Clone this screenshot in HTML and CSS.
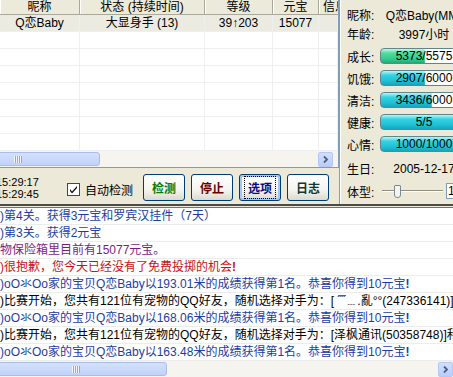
FILE: index.html
```html
<!DOCTYPE html>
<html lang="zh">
<head>
    <meta charset="UTF-8">
    <title>宠物助手</title>
    <link rel="stylesheet" href="styles.css">
</head>
<body>
    <div class="top">
        <div class="left">
            <div class="list">
                <div class="lv-head">
                    <span>昵称</span>
                    <span>状态 (持续时间)</span>
                    <span>等级</span>
                    <span>元宝</span>
                    <span class="cut">信息</span>
                </div>
                <div class="lv-body">
                    <div class="lv-row sel">
                        <span>Q恋Baby</span><span>大显身手 (13)</span><span>39↑203</span><span>15077</span><span></span>
                    </div>
                    <div class="lv-row"><span></span><span></span><span></span><span></span><span></span></div>
                    <div class="lv-row"><span></span><span></span><span></span><span></span><span></span></div>
                    <div class="lv-row"><span></span><span></span><span></span><span></span><span></span></div>
                    <div class="lv-row"><span></span><span></span><span></span><span></span><span></span></div>
                    <div class="lv-row"><span></span><span></span><span></span><span></span><span></span></div>
                    <div class="lv-row"><span></span><span></span><span></span><span></span><span></span></div>
                    <div class="lv-row"><span></span><span></span><span></span><span></span><span></span></div>
                </div>
                <div class="hscroll short">
                    <div class="thumb"><i class="grip"></i></div>
                    <div class="sb-btn">
                        <svg width="9" height="9" viewBox="0 0 9 9"><path d="M3 1.5l3 3-3 3" fill="none" stroke="#4d6185" stroke-width="1.8"/></svg>
                    </div>
                </div>
            </div>
            <div class="controls">
                <div class="times">
                    <div>15:29:17</div>
                    <div>15:29:45</div>
                </div>
                <label class="auto">
                    <svg class="check" width="13" height="13" viewBox="0 0 13 13">
                        <rect x="0.5" y="0.5" width="12" height="12" fill="#fff" stroke="#1c5180"/>
                        <path d="M3 6l2 2.5 5-5.5v2l-5 5.5-2-2.5z" fill="#111"/>
                    </svg>
                    <span>自动检测</span>
                </label>
                <div class="btns">
                    <button class="btn green">检测</button>
                    <button class="btn maroon">停止</button>
                    <button class="btn navy focus"><span>选项</span></button>
                    <button class="btn slate">日志</button>
                </div>
            </div>
        </div>
        <div class="panel">
            <div class="prow short"><span class="plabel">昵称:</span><span class="pval">Q恋Baby(MM)</span></div>
            <div class="prow short"><span class="plabel">年龄:</span><span class="pval">3997小时</span></div>
            <div class="bars">
                <div class="prow"><span class="plabel">成长:</span><span class="bar grow" style="background-size: 51% 100%, 100% 100%">5373/5575</span></div>
                <div class="prow"><span class="plabel">饥饿:</span><span class="bar" style="background-size: 51% 100%, 100% 100%">2907/6000</span></div>
                <div class="prow"><span class="plabel">清洁:</span><span class="bar" style="background-size: 59% 100%, 100% 100%">3436/6000</span></div>
                <div class="prow"><span class="plabel">健康:</span><span class="bar" style="background-size: 100% 100%, 100% 100%">5/5</span></div>
                <div class="prow"><span class="plabel">心情:</span><span class="bar" style="background-size: 100% 100%, 100% 100%">1000/1000</span></div>
            </div>
            <div class="prow tall"><span class="plabel">生日:</span><span class="pval">2005-12-17</span></div>
            <div class="prow small">
                <span class="plabel">体型:</span>
                <span class="slider"><i class="knob"></i></span>
                <span class="edit">1</span>
            </div>
        </div>
    </div>
    <div class="sep"></div>
    <div class="log">
        <div class="lrow blue">)第4关。获得3元宝和罗宾汉挂件（7天）</div>
        <div class="lrow blue">)第3关。获得2元宝</div>
        <div class="lrow purple">物保险箱里目前有15077元宝。</div>
        <div class="lrow red">)很抱歉，您今天已经没有了免费投掷的机会<b>!</b></div>
        <div class="lrow blue">)oO氺Oo家的宝贝Q恋Baby以193.01米的成绩获得第1名。恭喜你得到10元宝<b>!</b></div>
        <div class="lrow">)比赛开始，您共有121位有宠物的QQ好友，随机选择对手为：[ ˝˝﹍.亂°°(247336141)]和</div>
        <div class="lrow blue">)oO氺Oo家的宝贝Q恋Baby以168.06米的成绩获得第1名。恭喜你得到10元宝<b>!</b></div>
        <div class="lrow">)比赛开始，您共有121位有宠物的QQ好友，随机选择对手为：[泽枫通讯(50358748)]和</div>
        <div class="lrow blue">)oO氺Oo家的宝贝Q恋Baby以163.48米的成绩获得第1名。恭喜你得到10元宝<b>!</b></div>
        <div class="hscroll">
            <div class="thumb wide"><i class="grip"></i></div>
            <div class="sb-btn">
                <svg width="9" height="9" viewBox="0 0 9 9"><path d="M3 1.5l3 3-3 3" fill="none" stroke="#4d6185" stroke-width="1.8"/></svg>
            </div>
        </div>
    </div>
</body>
</html>
```

FILE: styles.css
```css
body {
    margin: 0;
    width: 453px;
    height: 377px;
    overflow: hidden;
    background-color: #ece9d8;
    font: 12px "Liberation Sans", "Noto Sans CJK SC", sans-serif;
    color: #000;
}

.top {
    display: flex;
    height: 204px;
}

.left {
    width: 339px;
    flex: none;
    display: flex;
    flex-direction: column;
}

/* list view */
.list {
    height: 168px;
    box-sizing: border-box;
    background-color: #fff;
    border-right: 1px solid #7f9db9;
    border-bottom: 1px solid #7f9db9;
    display: flex;
    flex-direction: column;
    overflow: hidden;
}

.lv-head,
.lv-row {
    display: grid;
    grid-template-columns: 80px 125px 68px 46px 1fr;
    white-space: nowrap;
}

.lv-head {
    height: 15px;
    box-sizing: border-box;
    background-color: #ebeadb;
    border-bottom: 1px solid #aca899;
    flex: none;
}

.lv-head span {
    border-right: 1px solid #aca899;
    box-shadow: inset 1px 0 #fff;
    text-align: center;
    line-height: 14px;
    overflow: hidden;
}

.lv-head .cut {
    text-align: left;
    padding-left: 4px;
    border-right: none;
}

.lv-body {
    flex: 1;
    overflow: hidden;
}

.lv-row {
    height: 17px;
    box-sizing: border-box;
    border-bottom: 1px solid #efefef;
}

.lv-row span {
    border-right: 1px solid #efefef;
    text-align: center;
    line-height: 16px;
}

.lv-row.sel {
    background-color: #ecebe2;
}

/* scrollbars */
.hscroll {
    height: 16px;
    flex: none;
    display: flex;
    align-items: center;
    background-color: #f5f4ef;
}

.hscroll.short .sb-btn {
    margin-right: 5px;
}

.thumb {
    width: 103px;
    height: 14px;
    margin-left: -3px;
    box-sizing: border-box;
    border: 1px solid #a9bde9;
    border-radius: 3px;
    background: linear-gradient(#d4e0fc, #c0d2fa);
    display: flex;
    align-items: center;
    padding-left: 16px;
}

.thumb.wide {
    width: 170px;
    padding-left: 74px;
}

.grip {
    width: 8px;
    height: 7px;
    background: repeating-linear-gradient(90deg, #f3f6fe 0 1px, #8ea6e4 1px 2px);
}

.sb-btn {
    width: 15px;
    height: 15px;
    margin-left: auto;
    box-sizing: border-box;
    border: 1px solid #b5c8f4;
    border-radius: 2px;
    background: linear-gradient(#d2defd, #b9cdfb);
    display: flex;
    align-items: center;
    justify-content: center;
}

/* controls under the list */
.controls {
    flex: 1;
    display: flex;
    align-items: flex-start;
    padding-top: 6px;
}

.times {
    width: 71px;
    margin-left: -4px;
    padding-top: 2px;
    font-size: 11px;
    line-height: 12px;
}

.auto {
    display: flex;
    align-items: center;
    gap: 5px;
    margin-top: 7px;
    width: 76px;
}

.check {
    flex: none;
}

.btns {
    display: flex;
    gap: 6px;
}

.btn {
    width: 42px;
    height: 27px;
    padding: 0;
    border: 1px solid #003c74;
    border-radius: 3px;
    background: linear-gradient(#ffffff, #f4f4ef 60%, #dcd8cb);
    font: bold 12px "Noto Sans CJK SC", sans-serif;
    cursor: pointer;
}

.btn.green { color: #0b7a0b; }
.btn.maroon { color: #6b0000; }
.btn.navy { color: #0a0a86; }
.btn.slate { color: #103838; }

.btn.focus {
    box-shadow: inset 0 0 0 2px #a9c4f0;
}

.btn.focus span {
    display: inline-block;
    padding: 2px 3px;
    outline: 1px dotted #000;
}

/* right panel */
.panel {
    flex: 1;
    border-left: 1px solid #9d9a8a;
    box-shadow: inset 1px 0 #fff;
    padding: 5px 0 0 7px;
    overflow: hidden;
    white-space: nowrap;
}

.prow {
    display: flex;
    align-items: center;
    height: 22px;
}

.prow.short { height: 19px; }
.prow.tall { height: 27px; }
.prow.small { height: 18px; }

.bars {
    margin-top: 2px;
}

.plabel {
    width: 33px;
    flex: none;
}

.pval {
    width: 88px;
    flex: none;
    text-align: center;
}

.bar {
    width: 88px;
    height: 16px;
    flex: none;
    box-sizing: border-box;
    border: 1px solid #62858c;
    border-radius: 4px;
    background: linear-gradient(#b8f6f8, #33d3e2 30%, #1fc0d6 70%, #19a3bb) no-repeat, #fff;
    text-align: center;
    line-height: 14px;
}

.bar.grow {
    background: linear-gradient(#c4f7dc, #4ddc9c 30%, #35cc90 70%, #26a876) no-repeat, #fff;
}

.slider {
    width: 61px;
    height: 14px;
    margin-left: 2px;
    flex: none;
    display: flex;
    align-items: center;
    background: linear-gradient(transparent 6px, #8f8d80 6px, #8f8d80 7px, #fff 7px, #fff 8px, transparent 8px);
}

.knob {
    width: 5px;
    height: 11px;
    margin-left: 12px;
    background-color: #f4f3ee;
    border: 1px solid #7b8a99;
    border-radius: 1px 1px 3px 3px;
}

.edit {
    width: 30px;
    height: 16px;
    margin-left: 3px;
    box-sizing: border-box;
    border: 1px solid #7f9db9;
    background-color: #fff;
    padding-left: 1px;
    line-height: 14px;
}

/* separator and log */
.sep {
    height: 4px;
    box-sizing: border-box;
    border-top: 2px solid #4b4b47;
    border-bottom: 1px solid #75746c;
}

.log {
    height: 169px;
    background-color: #fff;
    display: flex;
    flex-direction: column;
    overflow: hidden;
}

.lrow {
    height: 17px;
    flex: none;
    box-sizing: border-box;
    border-bottom: 1px solid #ececec;
    line-height: 16px;
    white-space: nowrap;
}

.lrow.blue { color: #1b3ea2; }
.lrow.purple { color: #7d1d84; }
.lrow.red { color: #c41414; }
```
